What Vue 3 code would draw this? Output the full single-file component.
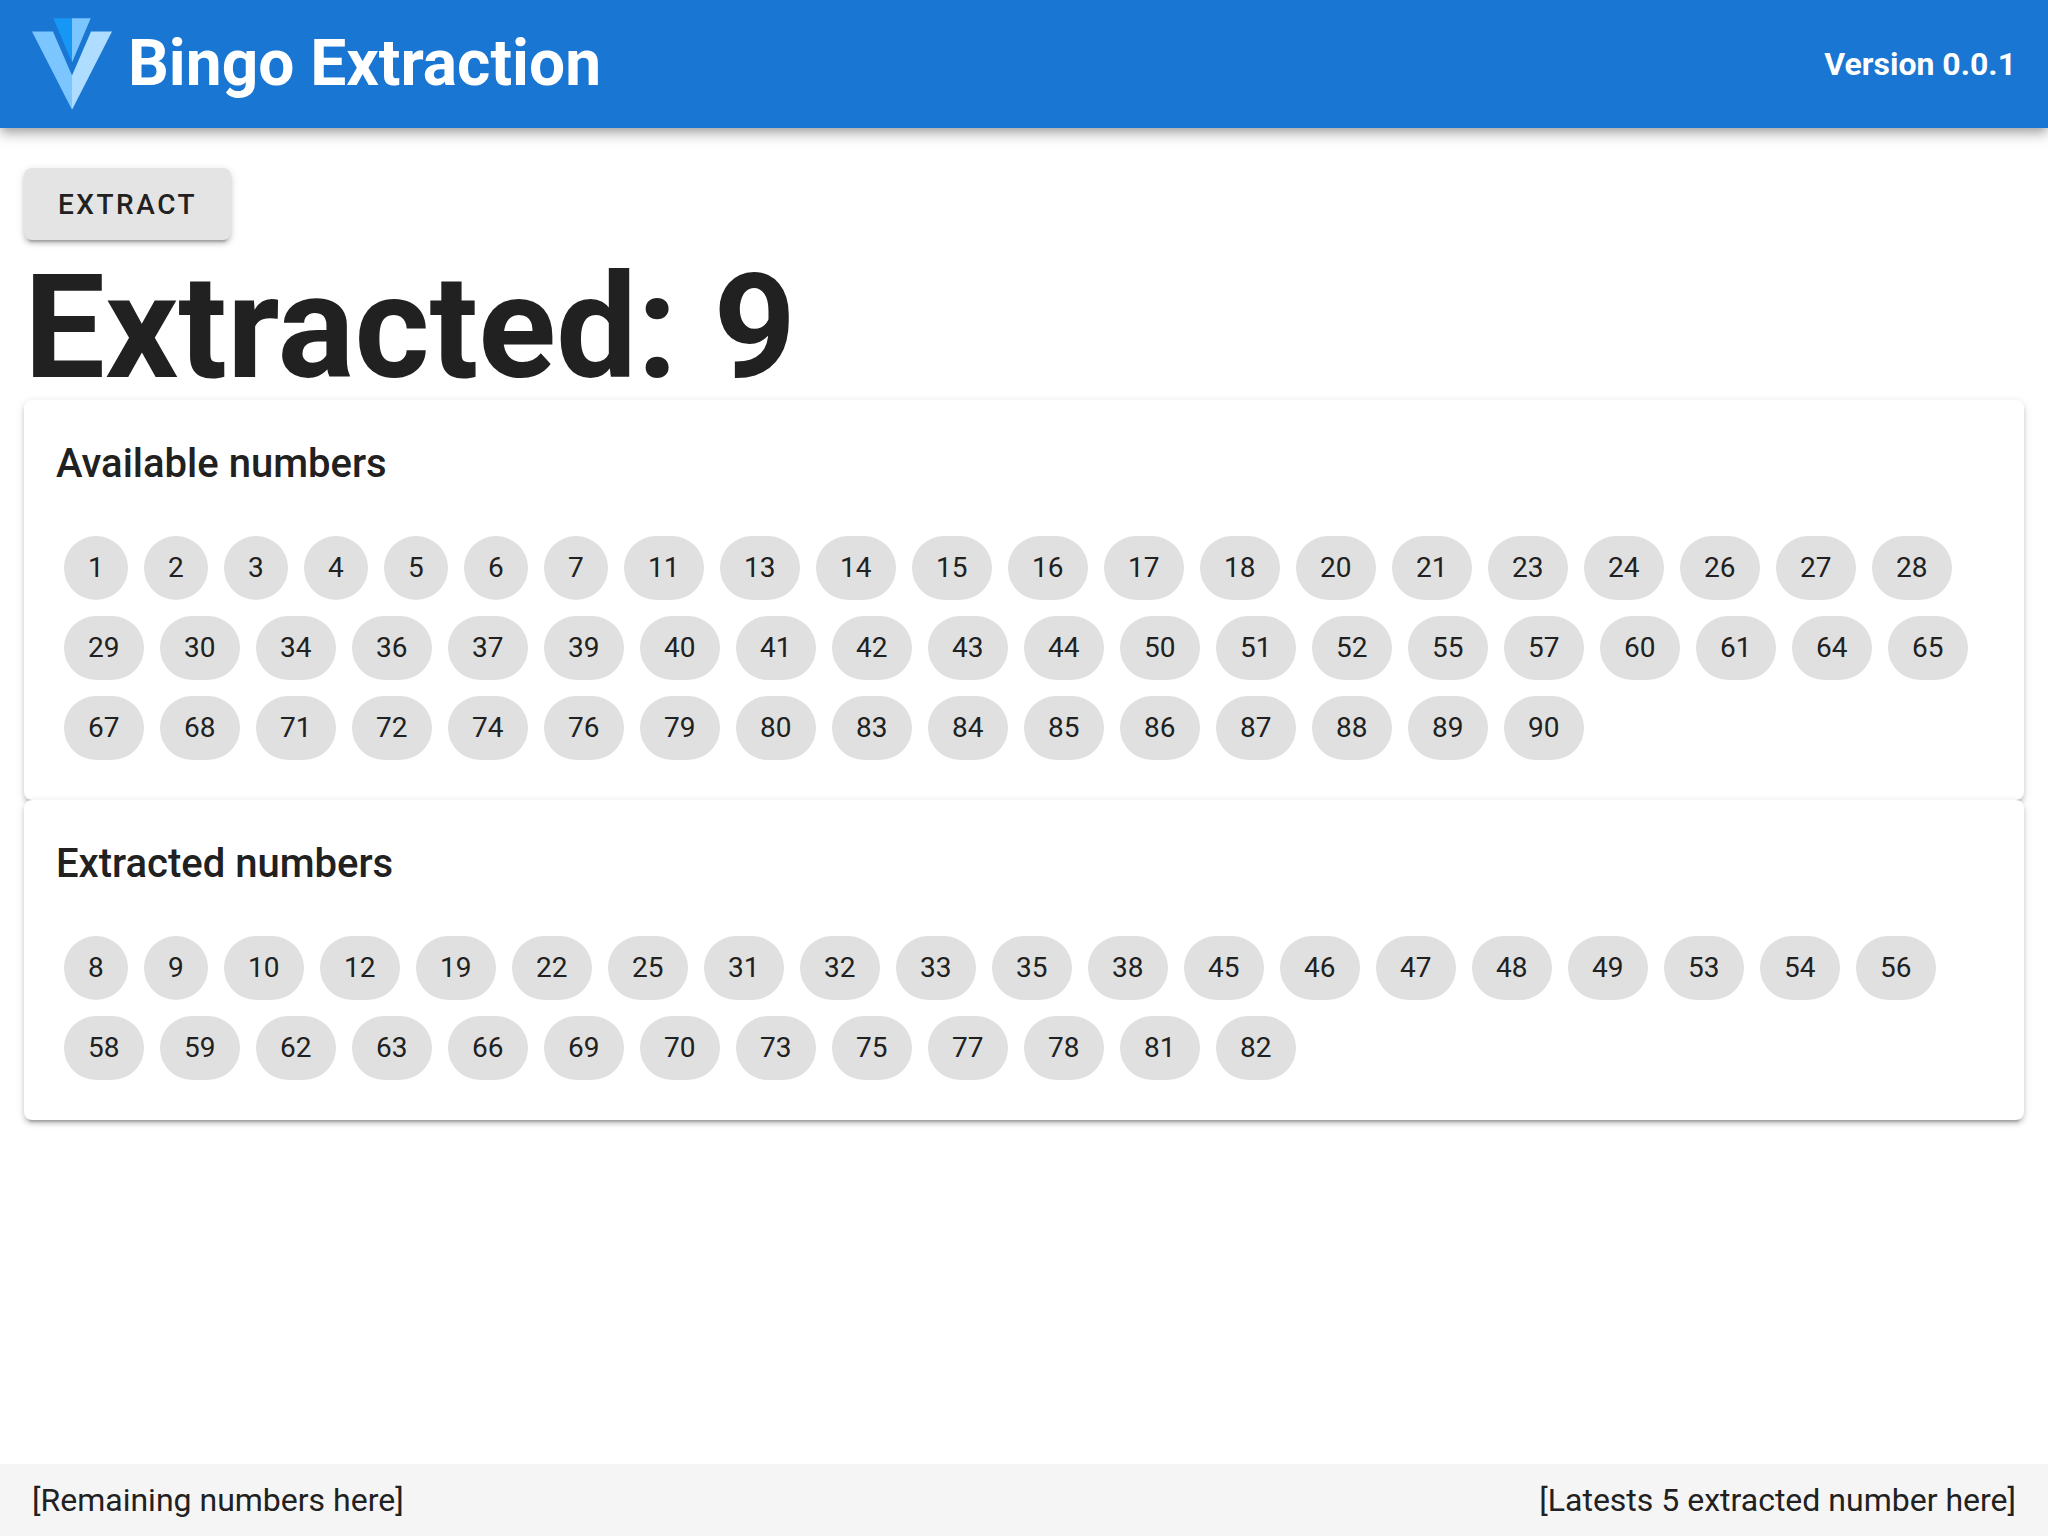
<script setup>
import { computed, ref } from 'vue'

const extracted = ref([
  8, 9, 10, 12, 19, 22, 25, 31, 32, 33, 35, 38, 45, 46, 47, 48, 49, 53, 54, 56,
  58, 59, 62, 63, 66, 69, 70, 73, 75, 77, 78, 81, 82,
])
const current = ref(9)

const available = computed(() =>
  Array.from({ length: 90 }, (_, i) => i + 1).filter((n) => !extracted.value.includes(n)),
)

const cards = computed(() => [
  { title: 'Available numbers', numbers: available.value },
  { title: 'Extracted numbers', numbers: extracted.value },
])

function extract() {
  const pool = available.value
  if (!pool.length) return
  const next = pool[Math.floor(Math.random() * pool.length)]
  current.value = next
  extracted.value = [...extracted.value, next].sort((a, b) => a - b)
}
</script>

<template>
  <div class="app">
    <header class="bar">
      <svg class="logo" viewBox="0 0 87.5 100" aria-hidden="true">
        <polygon fill="#1697f6" points="43.75,0 23.31,0 43.75,48.32" />
        <polygon fill="#7bc6ff" points="43.75,62.5 43.75,100 0,14.58 22.92,14.58" />
        <polygon fill="#7bc6ff" points="43.75,0 64.19,0 43.75,48.32" />
        <polygon fill="#aeddff" points="64.58,14.58 87.5,14.58 43.75,100 43.75,62.5" />
      </svg>
      <h1 class="name">Bingo Extraction</h1>
      <strong class="version">Version 0.0.1</strong>
    </header>

    <main class="content">
      <button class="extract" type="button" @click="extract">EXTRACT</button>
      <p class="current">Extracted: {{ current }}</p>

      <section v-for="card in cards" :key="card.title" class="card">
        <h2 class="card-title">{{ card.title }}</h2>
        <ul class="chips">
          <li v-for="n in card.numbers" :key="n" class="chip" :class="{ wide: n > 9 }">{{ n }}</li>
        </ul>
      </section>
    </main>

    <footer class="footer">
      <span>[Remaining numbers here]</span>
      <span>[Latests 5 extracted number here]</span>
    </footer>
  </div>
</template>

<style>
body {
  margin: 0;
  background: #fff;
}
</style>

<style scoped>
.app {
  display: flex;
  flex-direction: column;
  min-height: 100vh;
  color: #212121;
  font-family: Roboto, 'Liberation Sans', sans-serif;
  font-size: 32px;
  line-height: 48px;
}

.bar {
  display: flex;
  align-items: center;
  gap: 16px;
  height: 128px;
  padding: 0 32px;
  background: #1976d2;
  color: #fff;
  box-shadow:
    0 4px 8px -2px rgba(0, 0, 0, 0.2),
    0 8px 10px 0 rgba(0, 0, 0, 0.14),
    0 2px 20px 0 rgba(0, 0, 0, 0.12);
}

.logo {
  width: 80px;
  height: 92px;
}

.name {
  margin: 0;
  font-size: 64px;
  font-weight: 700;
  line-height: 96px;
}

.version {
  margin-left: auto;
  font-weight: 700;
}

.content {
  flex: 1;
  padding: 40px 24px 24px;
}

.extract {
  display: block;
  height: 72px;
  padding: 0 34px;
  border: 0;
  border-radius: 8px;
  background: #e4e4e4;
  color: inherit;
  font-family: inherit;
  font-size: 28px;
  font-weight: 500;
  letter-spacing: 0.09em;
  cursor: pointer;
}

.extract,
.card {
  box-shadow:
    0 6px 2px -4px rgba(0, 0, 0, 0.2),
    0 4px 4px 0 rgba(0, 0, 0, 0.14),
    0 2px 10px 0 rgba(0, 0, 0, 0.12);
}

.current {
  margin: 16px 0 0;
  font-size: 144px;
  font-weight: 700;
  line-height: 144px;
}

.card {
  padding: 32px;
  border-radius: 8px;
  background: #fff;
}

.card-title {
  margin: 0 0 32px;
  font-size: 40px;
  font-weight: 500;
  line-height: 64px;
}

.chips {
  display: flex;
  flex-wrap: wrap;
  gap: 16px;
  margin: 0;
  padding: 8px;
  list-style: none;
}

.chip {
  box-sizing: border-box;
  min-width: 64px;
  padding: 0 24px;
  border-radius: 32px;
  background: #e0e0e0;
  font-size: 28px;
  line-height: 64px;
}

.chip.wide {
  min-width: 80px;
}

.footer {
  display: flex;
  justify-content: space-between;
  padding: 12px 32px;
  background: #f5f5f5;
}
</style>
